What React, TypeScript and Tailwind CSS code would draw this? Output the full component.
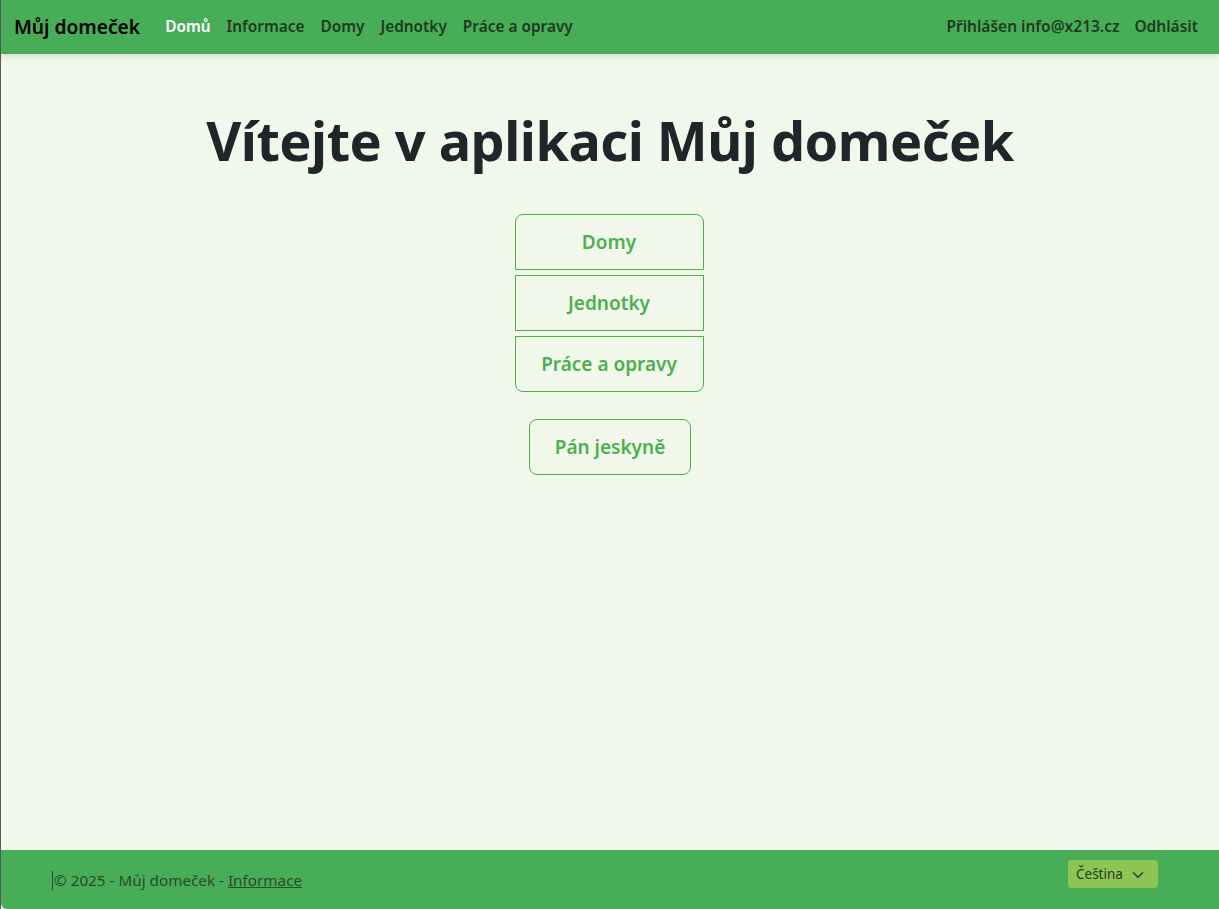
import React from 'react';

const font = { fontFamily: '"Noto Sans", "Open Sans", sans-serif' };

const navLinks = ['Informace', 'Domy', 'Jednotky', 'Práce a opravy'];

export default function App() {
  return (
    <div
      className="flex min-h-[909px] flex-col border-l border-[#5a5a5a] bg-[#f1f7ea] text-[#212529]"
      style={font}
    >
      <nav className="relative z-10 flex h-[54px] items-center justify-between bg-[#47ae57] pl-[13px] pr-[21px] shadow-[0_2px_6px_rgba(0,0,0,0.12)]">
        <div className="flex items-center">
          <span className="mr-[25px] text-[19.2px] font-semibold text-black">Můj domeček</span>
          <div className="flex items-center gap-[16px] text-[15.4px] font-semibold text-[#1e3a22]">
            <span className="text-white">Domů</span>
            {navLinks.map((l) => (
              <span key={l}>{l}</span>
            ))}
          </div>
        </div>
        <div className="flex items-center gap-[15px] text-[15.5px] font-semibold text-[#1e3a22]">
          <span>Přihlášen info@x213.cz</span>
          <span>Odhlásit</span>
        </div>
      </nav>

      <main className="flex flex-1 flex-col items-center pt-[54px]">
        <h1 className="text-[54px] font-bold leading-[1.2] tracking-[-0.5px] text-[#212529]">
          Vítejte v aplikaci Můj domeček
        </h1>
        <div className="mt-[41px] flex w-[189px] -translate-x-px flex-col gap-[5px]">
          <button className="h-[56px] rounded-t-[8px] border border-[#4caf50] text-[19px] font-semibold text-[#4caf50]">
            Domy
          </button>
          <button className="h-[56px] border border-[#4caf50] text-[19px] font-semibold text-[#4caf50]">
            Jednotky
          </button>
          <button className="h-[56px] rounded-b-[8px] border border-[#4caf50] text-[19px] font-semibold text-[#4caf50]">
            Práce a opravy
          </button>
        </div>
        <button className="mt-[27px] h-[56px] rounded-[8px] border border-[#4caf50] px-[25px] text-[19px] font-semibold text-[#4caf50]">
          Pán jeskyně
        </button>
      </main>

      <footer className="flex h-[59px] items-center justify-between rounded-bl-[6px] bg-[#47ae57] pl-[51px] pr-[61px]">
        <div className="mt-[2px] flex items-center text-[15.25px] text-[#2b4a2f]">
          <span className="mr-[1px] h-[19px] w-px bg-[#2b4a2f]" />
          <span>© 2025 - Můj domeček - </span>
          <span className="ml-[4px] underline">Informace</span>
        </div>
        <div className="mb-[12px] flex h-[28px] w-[90px] items-center justify-between rounded-[4px] bg-[#8bc553] pl-[8px] pr-[14px] pt-[2px] text-[13.5px] text-[#2b3a25]">
          <span>Čeština</span>
          <svg width="12" height="12" viewBox="0 0 16 16" fill="none" stroke="#343a40" strokeWidth="2" strokeLinecap="round" strokeLinejoin="round">
            <path d="M2 5l6 6 6-6" />
          </svg>
        </div>
      </footer>
    </div>
  );
}
